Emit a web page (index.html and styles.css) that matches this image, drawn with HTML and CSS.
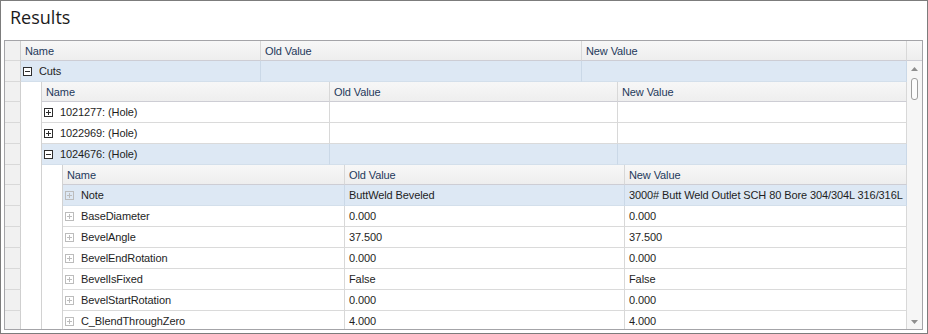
FILE: index.html
```html
<!DOCTYPE html>
<html lang="en">
<head>
  <meta charset="UTF-8">
  <title>Results</title>
  <link rel="stylesheet" href="styles.css">
</head>
<body>
  <div class="window">
    <div class="title">Results</div>

    <div class="grid">
      <div class="rows">
        <!-- level 1 -->
        <div class="row head">
          <div class="ind"></div>
          <div class="cell l1-name">Name</div>
          <div class="cell l1-old">Old Value</div>
          <div class="cell last">New Value</div>
        </div>
        <div class="row sel">
          <div class="ind"></div>
          <div class="cell l1-name"><svg class="box" width="9" height="9"><rect x="0.5" y="0.5" width="8" height="8"/><line x1="2" y1="4.5" x2="7" y2="4.5"/></svg>Cuts</div>
          <div class="cell l1-old"></div>
          <div class="cell last"></div>
        </div>

        <!-- level 2 -->
        <div class="row head">
          <div class="ind"></div>
          <div class="indent"></div>
          <div class="cell l2-name">Name</div>
          <div class="cell l2-old">Old Value</div>
          <div class="cell last">New Value</div>
        </div>
        <div class="row">
          <div class="ind"></div>
          <div class="indent"></div>
          <div class="cell l2-name"><svg class="box" width="9" height="9"><rect x="0.5" y="0.5" width="8" height="8"/><line x1="2" y1="4.5" x2="7" y2="4.5"/><line x1="4.5" y1="2" x2="4.5" y2="7"/></svg>1021277: (Hole)</div>
          <div class="cell l2-old"></div>
          <div class="cell last"></div>
        </div>
        <div class="row">
          <div class="ind"></div>
          <div class="indent"></div>
          <div class="cell l2-name"><svg class="box" width="9" height="9"><rect x="0.5" y="0.5" width="8" height="8"/><line x1="2" y1="4.5" x2="7" y2="4.5"/><line x1="4.5" y1="2" x2="4.5" y2="7"/></svg>1022969: (Hole)</div>
          <div class="cell l2-old"></div>
          <div class="cell last"></div>
        </div>
        <div class="row sel">
          <div class="ind"></div>
          <div class="indent"></div>
          <div class="cell l2-name"><svg class="box" width="9" height="9"><rect x="0.5" y="0.5" width="8" height="8"/><line x1="2" y1="4.5" x2="7" y2="4.5"/></svg>1024676: (Hole)</div>
          <div class="cell l2-old"></div>
          <div class="cell last"></div>
        </div>

        <!-- level 3 -->
        <div class="row head">
          <div class="ind"></div>
          <div class="indent"></div>
          <div class="indent"></div>
          <div class="cell l3-name">Name</div>
          <div class="cell l3-old">Old Value</div>
          <div class="cell last">New Value</div>
        </div>
        <div class="row sel">
          <div class="ind"></div>
          <div class="indent"></div>
          <div class="indent"></div>
          <div class="cell l3-name"><svg class="box light" width="9" height="9"><rect x="0.5" y="0.5" width="8" height="8"/><line x1="2" y1="4.5" x2="7" y2="4.5"/><line x1="4.5" y1="2" x2="4.5" y2="7"/></svg>Note</div>
          <div class="cell l3-old">ButtWeld Beveled</div>
          <div class="cell last">3000# Butt Weld Outlet SCH 80 Bore 304/304L 316/316L</div>
        </div>
        <div class="row">
          <div class="ind"></div>
          <div class="indent"></div>
          <div class="indent"></div>
          <div class="cell l3-name"><svg class="box light" width="9" height="9"><rect x="0.5" y="0.5" width="8" height="8"/><line x1="2" y1="4.5" x2="7" y2="4.5"/><line x1="4.5" y1="2" x2="4.5" y2="7"/></svg>BaseDiameter</div>
          <div class="cell l3-old">0.000</div>
          <div class="cell last">0.000</div>
        </div>
        <div class="row">
          <div class="ind"></div>
          <div class="indent"></div>
          <div class="indent"></div>
          <div class="cell l3-name"><svg class="box light" width="9" height="9"><rect x="0.5" y="0.5" width="8" height="8"/><line x1="2" y1="4.5" x2="7" y2="4.5"/><line x1="4.5" y1="2" x2="4.5" y2="7"/></svg>BevelAngle</div>
          <div class="cell l3-old">37.500</div>
          <div class="cell last">37.500</div>
        </div>
        <div class="row">
          <div class="ind"></div>
          <div class="indent"></div>
          <div class="indent"></div>
          <div class="cell l3-name"><svg class="box light" width="9" height="9"><rect x="0.5" y="0.5" width="8" height="8"/><line x1="2" y1="4.5" x2="7" y2="4.5"/><line x1="4.5" y1="2" x2="4.5" y2="7"/></svg>BevelEndRotation</div>
          <div class="cell l3-old">0.000</div>
          <div class="cell last">0.000</div>
        </div>
        <div class="row">
          <div class="ind"></div>
          <div class="indent"></div>
          <div class="indent"></div>
          <div class="cell l3-name"><svg class="box light" width="9" height="9"><rect x="0.5" y="0.5" width="8" height="8"/><line x1="2" y1="4.5" x2="7" y2="4.5"/><line x1="4.5" y1="2" x2="4.5" y2="7"/></svg>BevelIsFixed</div>
          <div class="cell l3-old">False</div>
          <div class="cell last">False</div>
        </div>
        <div class="row">
          <div class="ind"></div>
          <div class="indent"></div>
          <div class="indent"></div>
          <div class="cell l3-name"><svg class="box light" width="9" height="9"><rect x="0.5" y="0.5" width="8" height="8"/><line x1="2" y1="4.5" x2="7" y2="4.5"/><line x1="4.5" y1="2" x2="4.5" y2="7"/></svg>BevelStartRotation</div>
          <div class="cell l3-old">0.000</div>
          <div class="cell last">0.000</div>
        </div>
        <div class="row">
          <div class="ind"></div>
          <div class="indent"></div>
          <div class="indent"></div>
          <div class="cell l3-name"><svg class="box light" width="9" height="9"><rect x="0.5" y="0.5" width="8" height="8"/><line x1="2" y1="4.5" x2="7" y2="4.5"/><line x1="4.5" y1="2" x2="4.5" y2="7"/></svg>C_BlendThroughZero</div>
          <div class="cell l3-old">4.000</div>
          <div class="cell last">4.000</div>
        </div>
      </div>

      <div class="vscroll">
        <div class="vs-head"></div>
        <div class="vs-track">
          <svg class="arrow up" width="7" height="4"><polygon points="3.5,0 7,4 0,4"/></svg>
          <div class="thumb"></div>
          <div class="vs-space"></div>
          <svg class="arrow down" width="7" height="4"><polygon points="0,0 7,0 3.5,4"/></svg>
        </div>
      </div>
    </div>
  </div>
</body>
</html>
```

FILE: styles.css
```css
body {
  margin: 0;
  font-family: "Liberation Sans", Arial, sans-serif;
  font-size: 11px;
  color: #1e1e1e;
  background: #fff;
}
.window {
  width: 928px;
  height: 334px;
  box-sizing: border-box;
  border: 1px solid #7c7c7c;
  padding: 0 3px;
  background: #fff;
}
.title {
  height: 39px;
  box-sizing: border-box;
  padding: 4px 0 0 6px;
  font: 18px/24px "Open Sans", sans-serif;
  color: #1b1b1b;
}
.grid {
  display: flex;
  width: 919px;
  height: 290px;
  box-sizing: border-box;
  border: 1px solid #a4a4a8;
  overflow: hidden;
}
.rows {
  flex: 1;
  overflow: hidden;
}
.row {
  display: flex;
  height: 21px;
}
.row.head {
  height: 20px;
}
.ind {
  width: 16px;
  box-sizing: border-box;
  background: #f1f1f1;
  border-right: 1px solid #cfcfcf;
  border-bottom: 1px solid #d9d9d9;
}
.indent {
  width: 21px;
  box-sizing: border-box;
  background: #fff;
  border-right: 1px solid #d2d2d2;
}
.cell {
  display: flex;
  align-items: center;
  box-sizing: border-box;
  padding-left: 4px;
  white-space: nowrap;
  overflow: hidden;
  letter-spacing: -0.1px;
  border-right: 1px solid #d8d8d8;
  border-bottom: 1px solid #dadada;
  background: #fff;
}
.cell.last {
  flex: 1;
}
.head .cell {
  background: linear-gradient(#f7f7f7, #eeeeee);
  color: #1e395b;
  border-bottom-color: #cdcdd4;
}
.sel .cell {
  background: #dde8f4;
  border-right-color: #cad8e7;
  border-bottom-color: #d3dfeb;
}
.l1-name { width: 240px; }
.l1-old { width: 321px; }
.l2-name { width: 288px; }
.l2-old { width: 288px; }
.l3-name { width: 282px; }
.l3-old { width: 280px; }

.box {
  flex: none;
  margin: 0 7px 0 -2px;
}
.box rect {
  fill: #fff;
  stroke: #2e2e2e;
}
.box line {
  stroke: #2e2e2e;
}
.box.light rect {
  fill: none;
  stroke: #bcbcbc;
}
.box.light line {
  stroke: #bcbcbc;
}

.vscroll {
  width: 15px;
  display: flex;
  flex-direction: column;
}
.vs-head {
  height: 20px;
  box-sizing: border-box;
  background: linear-gradient(#f7f7f7, #eeeeee);
  border-bottom: 1px solid #cdcdd4;
}
.vs-track {
  flex: 1;
  display: flex;
  flex-direction: column;
  align-items: center;
  background: #f6f6f6;
}
.arrow {
  flex: none;
  fill: #8e8e8e;
}
.arrow.up {
  margin-top: 6px;
}
.arrow.down {
  margin-bottom: 5px;
}
.thumb {
  width: 7px;
  height: 22px;
  margin-top: 7px;
  box-sizing: border-box;
  border: 1px solid #9d9d9d;
  border-radius: 3px;
  background: #fcfcfc;
}
.vs-space {
  flex: 1;
}
```
